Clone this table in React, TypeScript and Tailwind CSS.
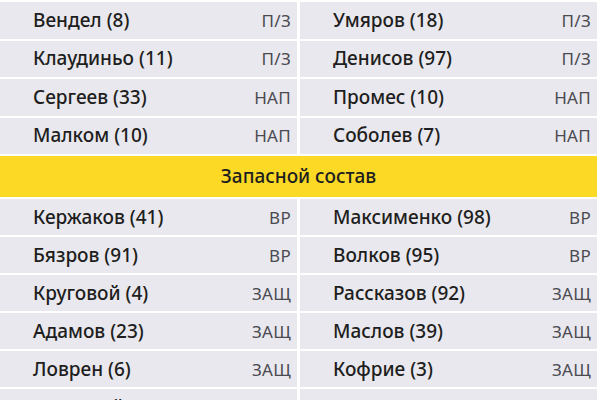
import React from "react";

type P = { name: string; pos: string };

const top: [P, P][] = [
  [{ name: "Вендел (8)", pos: "П/З" }, { name: "Умяров (18)", pos: "П/З" }],
  [{ name: "Клаудиньо (11)", pos: "П/З" }, { name: "Денисов (97)", pos: "П/З" }],
  [{ name: "Сергеев (33)", pos: "НАП" }, { name: "Промес (10)", pos: "НАП" }],
  [{ name: "Малком (10)", pos: "НАП" }, { name: "Соболев (7)", pos: "НАП" }],
];

const bottom: [P, P][] = [
  [{ name: "Кержаков (41)", pos: "ВР" }, { name: "Максименко (98)", pos: "ВР" }],
  [{ name: "Бязров (91)", pos: "ВР" }, { name: "Волков (95)", pos: "ВР" }],
  [{ name: "Круговой (4)", pos: "ЗАЩ" }, { name: "Рассказов (92)", pos: "ЗАЩ" }],
  [{ name: "Адамов (23)", pos: "ЗАЩ" }, { name: "Маслов (39)", pos: "ЗАЩ" }],
  [{ name: "Ловрен (6)", pos: "ЗАЩ" }, { name: "Кофрие (3)", pos: "ЗАЩ" }],
  [{ name: "Ракицкий (55)", pos: "ЗАЩ" }, { name: "Чистяков (5)", pos: "ЗАЩ" }],
];

function Cell({ p, h }: { p: P; h: string }) {
  return (
    <div className={`flex items-center justify-between bg-[#e9e8ee] pl-[33px] pr-[6px] ${h}`}>
      <span className="text-[19px] font-medium text-[#1e1e20] leading-none">{p.name}</span>
      <span className="text-[17px] text-[#4a4a50] leading-none tracking-[0.3px]">{p.pos}</span>
    </div>
  );
}

export default function App() {
  return (
    <div
      className="w-[600px] h-[400px] overflow-hidden bg-white pt-[2px]"
      style={{ fontFamily: '"Noto Sans", "Open Sans", sans-serif' }}
    >
      <div className="grid grid-cols-[297px_297px] gap-x-[3px] gap-y-[2px]">
        {top.map(([a, b], i) => (
          <React.Fragment key={i}>
            <Cell p={a} h="h-[36.5px]" />
            <Cell p={b} h="h-[36.5px]" />
          </React.Fragment>
        ))}
      </div>
      <div className="mt-[2px] h-[41px] w-[597px] bg-[#fbd925] flex items-center justify-center text-[19px] font-medium text-[#1e1e20]">
        Запасной состав
      </div>
      <div className="mt-[2px] grid grid-cols-[297px_297px] gap-x-[3px] gap-y-[2px]">
        {bottom.map(([a, b], i) => (
          <React.Fragment key={i}>
            <Cell p={a} h="h-[36px]" />
            <Cell p={b} h="h-[36px]" />
          </React.Fragment>
        ))}
      </div>
    </div>
  );
}
